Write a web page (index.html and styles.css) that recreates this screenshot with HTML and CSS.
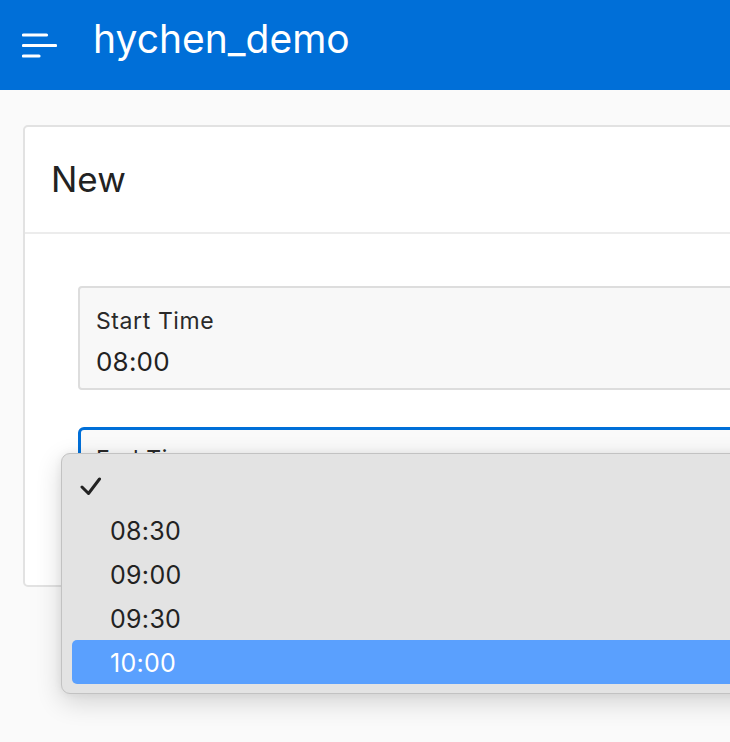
FILE: index.html
```html
<!DOCTYPE html>
<html>
<head>
<meta charset="utf-8">
<link rel="stylesheet" href="styles.css">
</head>
<body>
<header class="topbar">
  <svg class="menu-icon" width="35" height="26" viewBox="0 0 35 26">
    <line x1="1.5" y1="2" x2="24.5" y2="2" />
    <line x1="1.5" y1="12.5" x2="33.5" y2="12.5" />
    <line x1="1.5" y1="23" x2="17" y2="23" />
  </svg>
  <span class="title">hychen_demo</span>
</header>
<main class="main">
  <section class="card">
    <div class="card-header">New</div>
    <div class="card-body">
      <div class="field">
        <div class="field-label">Start Time</div>
        <div class="field-value">08:00</div>
      </div>
      <div class="field field-focused">
        <div class="field-label">End Time</div>
        <div class="field-value"></div>
      </div>
    </div>
  </section>
  <div class="dropdown">
    <div class="option option-checked">
      <svg class="check" width="22" height="20" viewBox="0 0 22 20">
        <polyline points="2,10 8.5,16.5 19.5,2" />
      </svg>
    </div>
    <div class="option">08:30</div>
    <div class="option">09:00</div>
    <div class="option">09:30</div>
    <div class="option option-active">10:00</div>
  </div>
</main>
</body>
</html>
```
FILE: styles.css
```css
html, body {
  margin: 0;
  padding: 0;
  overflow: hidden;
}
body {
  background: #fafafa;
  font-family: Inter, "Liberation Sans", Arial, sans-serif;
  color: #222;
  width: 730px;
  height: 742px;
}
.topbar {
  height: 90px;
  background: #006fd8;
  display: flex;
  align-items: center;
  padding-left: 22px;
  box-sizing: border-box;
}
.menu-icon {
  stroke: #fff;
  stroke-width: 3.2;
  stroke-linecap: round;
  margin-top: 2px;
}
.title {
  color: #fff;
  font-size: 39px;
  line-height: 46px;
  margin-left: 36px;
  margin-top: -13px;
}
.main {
  position: relative;
  padding: 35px 0 0 23px;
}
.card {
  width: 800px;
  background: #fff;
  border: 2px solid #e2e2e2;
  border-radius: 5px;
  box-sizing: border-box;
}
.card-header {
  height: 107px;
  box-sizing: border-box;
  padding: 31px 0 0 26px;
  font-size: 35px;
  border-bottom: 2px solid #ececec;
}
.card-body {
  padding: 52px 0 54px 53px;
  display: flex;
  flex-direction: column;
  gap: 37px;
}
.field {
  height: 104px;
  box-sizing: border-box;
  background: #f8f8f8;
  border: 2px solid #dddddd;
  border-radius: 4px;
  padding: 19px 0 0 16px;
}
.field-focused {
  border: 3px solid #006fd8;
  border-radius: 6px;
  padding: 15px 0 0 15px;
  background: #fafafa;
}
.field-label {
  font-size: 23px;
  letter-spacing: 0.6px;
  line-height: 28px;
  color: #2a2a2a;
}
.field-value {
  font-size: 26px;
  letter-spacing: 0.2px;
  line-height: 30px;
  margin-top: 12px;
  color: #222;
}
.dropdown {
  position: absolute;
  left: 61px;
  top: 363px;
  width: 720px;
  background: #e3e3e3;
  border: 1px solid #c2c2c2;
  border-radius: 9px;
  padding: 10px 0 9px 10px;
  box-shadow: 0 8px 26px rgba(0, 0, 0, 0.16), 0 0 8px rgba(0, 0, 0, 0.06);
}
.option {
  height: 44px;
  box-sizing: border-box;
  padding-top: 2px;
  display: flex;
  align-items: center;
  padding-left: 38px;
  font-size: 25px;
  letter-spacing: 0.3px;
  color: #222;
  border-radius: 5px;
}
.option-checked {
  padding-left: 8px;
}
.check {
  fill: none;
  stroke: #222;
  stroke-width: 3;
  stroke-linecap: round;
  stroke-linejoin: round;
}
.option-active {
  background: #5aa0fe;
  color: #fff;
}
```
